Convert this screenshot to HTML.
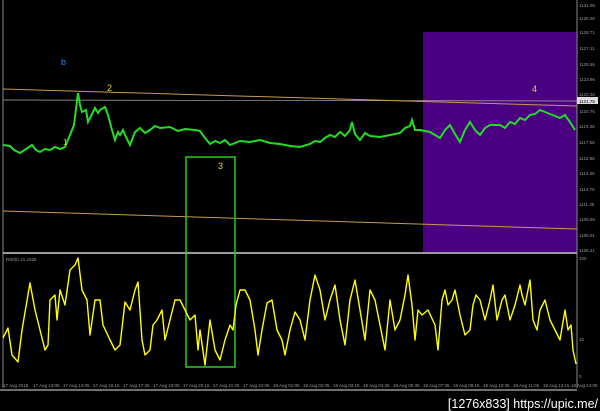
<!DOCTYPE html>
<html><head><meta charset="utf-8"><style>
html,body{margin:0;padding:0;background:#000;width:600px;height:411px;overflow:hidden}
svg{display:block}
</style></head><body>
<svg width="600" height="411" xmlns="http://www.w3.org/2000/svg" font-family="Liberation Sans, sans-serif">
<rect width="600" height="411" fill="#000"/>
<rect x="423" y="32" width="154" height="220" fill="#4b0082"/>
<line x1="3" y1="0" x2="3" y2="388" stroke="#888" stroke-width="1"/>
<line x1="577" y1="0" x2="577" y2="388" stroke="#888" stroke-width="1"/>
<line x1="3" y1="253" x2="577" y2="253" stroke="#999" stroke-width="2"/>
<line x1="0" y1="390" x2="577" y2="390" stroke="#ddd" stroke-width="1"/>
<line x1="3" y1="100" x2="577" y2="101" stroke="#aaa" stroke-width="0.7"/>
<line x1="3" y1="89" x2="577" y2="106" stroke="#c89a50" stroke-width="1"/>
<line x1="3" y1="211" x2="577" y2="229" stroke="#c89a50" stroke-width="1"/>
<polyline fill="none" stroke="#22dd22" stroke-width="2" points="3,145 10,146 14,150 20,153 26,149 32,145 36,150 40,152 45,149 50,150 55,147 60,149 65,147 70,135 74,125 78,93 80,105 82,112 86,110 88,122 90,118 93,112 95,108 98,113 100,110 105,107 108,115 112,130 115,140 118,132 120,135 123,130 125,135 130,145 135,132 140,128 145,133 150,130 155,126 160,128 170,127 178,131 185,129 195,130 200,131 205,138 210,144 215,141 220,143 225,140 230,145 240,141 250,142 260,140 270,143 280,144 290,146 300,147 310,144 315,141 320,142 325,138 330,135 335,137 340,132 345,136 350,130 352,122 355,134 360,140 365,133 370,136 380,137 390,135 400,133 405,128 410,126 412,120 415,130 420,130 430,132 435,135 440,138 445,130 450,125 455,134 460,142 465,130 470,122 475,130 480,135 485,128 490,125 500,125 505,128 510,122 515,124 520,118 525,120 530,115 535,114 540,110 545,112 550,114 555,116 560,118 565,115 570,122 575,130"/>
<rect x="186" y="157" width="49" height="210" fill="none" stroke="#22cc22" stroke-width="1.5"/>
<text x="61" y="65" fill="#1e90ff" font-size="9">b</text>
<text x="107" y="91" fill="#e8d23c" font-size="9">2</text>
<text x="63" y="145" fill="#e8d23c" font-size="8">1</text>
<text x="218" y="169" fill="#e8d23c" font-size="9">3</text>
<text x="532" y="92" fill="#e8d23c" font-size="9">4</text>
<text x="6" y="261" fill="#999" font-size="4.5">RSI(5) 21.2325</text>
<polyline fill="none" stroke="#ffff00" stroke-width="1.4" stroke-linejoin="round" points="3,338 8,328 12,355 18,362 22,330 30,283 35,310 40,330 45,350 48,345 50,300 55,295 57,320 60,290 65,305 70,270 75,265 78,258 82,290 87,300 90,335 95,300 100,300 103,325 110,340 115,350 120,345 125,302 130,310 135,290 138,282 142,340 145,355 150,350 153,325 157,320 162,310 165,340 170,320 175,300 180,300 185,310 190,320 195,315 198,350 200,330 205,365 210,320 215,350 220,360 225,340 230,325 233,330 236,305 240,290 245,290 250,300 255,330 258,355 262,330 267,303 272,300 277,330 282,340 285,355 290,330 295,312 300,320 305,340 310,300 315,275 320,290 325,320 330,300 335,285 340,320 345,345 350,300 355,280 360,310 365,340 370,290 375,300 380,325 385,350 390,300 395,330 400,320 405,295 408,275 412,305 415,340 418,310 422,315 428,310 435,325 438,350 442,300 445,290 448,305 452,300 455,290 460,315 465,335 470,330 473,305 476,295 480,300 485,320 490,300 493,285 497,320 502,300 505,295 510,320 515,305 520,285 522,295 525,305 530,280 533,320 537,330 540,310 545,300 550,320 555,330 560,340 565,310 568,330 571,325 573,350 576,364"/>
<g fill="#999" font-size="4.5">
<text x="579" y="7">1131.06</text><text x="579" y="20">1130.26</text><text x="579" y="34">1128.71</text><text x="579" y="50">1127.11</text><text x="579" y="66">1125.56</text><text x="579" y="81">1123.96</text><text x="579" y="96">1122.36</text><text x="579" y="113">1120.76</text><text x="579" y="128">1119.36</text><text x="579" y="144">1117.56</text><text x="579" y="160">1115.96</text><text x="579" y="175">1114.36</text><text x="579" y="191">1112.76</text><text x="579" y="206">1111.36</text><text x="579" y="221">1109.56</text><text x="579" y="237">1108.01</text><text x="579" y="252">1106.41</text>
<text x="579" y="260">100</text><text x="579" y="341">32</text><text x="579" y="378">0</text>
<text x="3" y="387">17 Aug 2015</text><text x="33" y="387">17 Aug 13:05</text><text x="63" y="387">17 Aug 14:05</text><text x="93" y="387">17 Aug 16:15</text><text x="123" y="387">17 Aug 17:25</text><text x="153" y="387">17 Aug 19:00</text><text x="183" y="387">17 Aug 20:15</text><text x="213" y="387">17 Aug 21:25</text><text x="243" y="387">17 Aug 22:05</text><text x="273" y="387">18 Aug 01:05</text><text x="303" y="387">18 Aug 02:05</text><text x="333" y="387">18 Aug 03:15</text><text x="363" y="387">18 Aug 04:25</text><text x="393" y="387">18 Aug 05:35</text><text x="423" y="387">18 Aug 07:05</text><text x="453" y="387">18 Aug 09:15</text><text x="483" y="387">18 Aug 10:35</text><text x="513" y="387">18 Aug 11:05</text><text x="543" y="387">18 Aug 13:15</text><text x="571" y="387">18 Aug 14:05</text>
</g>
<rect x="577" y="97" width="21" height="7" fill="#ddd"/>
<text x="579" y="103" fill="#000" font-size="4.5">1121.75</text>
<text x="598" y="408" fill="#fff" font-size="12.5" text-anchor="end">[1276x833] https://upic.me/</text>
</svg>
</body></html>
